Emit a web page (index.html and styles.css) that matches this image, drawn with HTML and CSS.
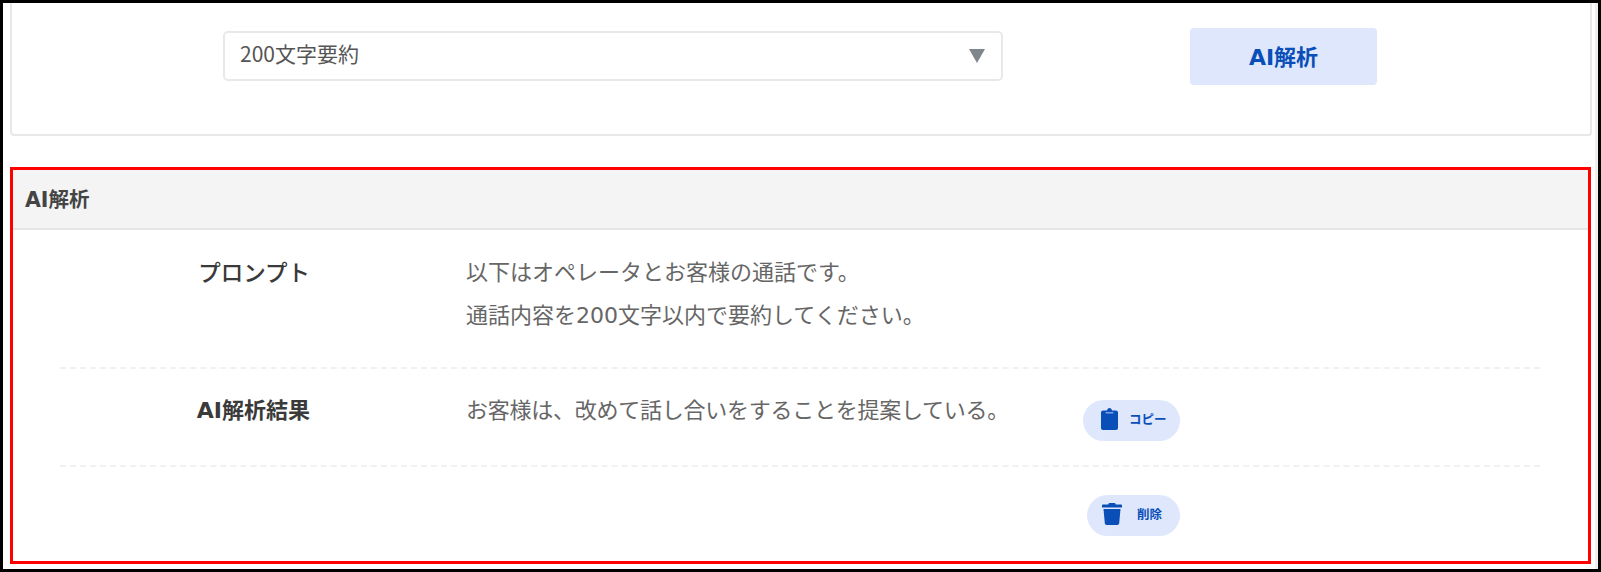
FILE: index.html
```html
<!DOCTYPE html>
<html lang="ja">
<head>
<meta charset="utf-8">
<title>AI解析</title>
<link rel="stylesheet" href="styles.css">
</head>
<body>
<div class="frame">
  <main class="main">
    <section class="card">
      <div class="select">
        <span>200文字要約</span>
        <span class="arrow"></span>
      </div>
      <button class="run" type="button">AI解析</button>
    </section>
    <section class="panel">
      <h2 class="panel-title">AI解析</h2>
      <div class="row row-prompt">
        <div class="label label-light">プロンプト</div>
        <div class="value">
          <p>以下はオペレータとお客様の通話です。</p>
          <p>通話内容を200文字以内で要約してください。</p>
        </div>
      </div>
      <div class="row row-result">
        <div class="label">AI解析結果</div>
        <div class="value"><p class="tight">お客様は、改めて話し合いをすることを提案している。</p></div>
        <button class="pill pill-copy" type="button">
          <svg class="icon" viewBox="0 0 17 22" aria-hidden="true"><path d="M2 2.500h4C6.300 1 7.200 0 8.500 0S10.700 1 11 2.500h4c1.100 0 2 .9 2 2V20c0 1.100-.9 2-2 2H2c-1.100 0-2-.9-2-2V4.500c0-1.100.9-2 2-2z" fill="#0a4fb8"/><rect x="4.500" y="4" width="8" height="1.500" rx=".7" fill="#7fa3e2"/></svg>
          <span>コピー</span>
        </button>
      </div>
      <div class="row row-delete">
        <button class="pill pill-delete" type="button">
          <svg class="icon" viewBox="0 0 20 22" aria-hidden="true"><path d="M7 0h6l.8 1.500H19c.6 0 1 .4 1 1V4.500H0V2.500c0-.6.4-1 1-1h5.200zM1.500 6h17l-1.300 14.300c-.1 1-.9 1.700-1.900 1.700H4.700c-1 0-1.800-.7-1.900-1.700z" fill="#0a4fb8"/></svg>
          <span>削除</span>
        </button>
      </div>
    </section>
  </main>
  <div class="edge"></div>
</div>
</body>
</html>
```
FILE: styles.css
```css
* { box-sizing: border-box; }
html, body { margin: 0; padding: 0; }
body {
  width: 1601px;
  height: 572px;
  overflow: hidden;
  background: #fff;
  font-family: "DejaVu Sans", "Noto Sans CJK JP", sans-serif;
  color: #555;
}
.frame {
  height: 572px;
  border: 3px solid #000;
  display: flex;
}
.main {
  flex: 1;
  min-width: 0;
  padding: 0 3px 5px 7px;
  display: flex;
  flex-direction: column;
  gap: 31px;
}
.edge {
  width: 3px;
  background: #efefef;
}
.card {
  height: 133px;
  border: 2px solid #e8e8e8;
  border-top: 0;
  border-radius: 0 0 4px 4px;
  padding: 25px 213px 0 211px;
  display: flex;
  align-items: flex-start;
  justify-content: space-between;
}
.select {
  width: 780px;
  height: 50px;
  margin-top: 3px;
  border: 2px solid #e8e8e8;
  border-radius: 5px;
  padding: 0 16px 7px 15px;
  display: flex;
  align-items: center;
  justify-content: space-between;
  font-family: "Noto Sans CJK JP", sans-serif;
  font-size: 21px;
  color: #555;
}
.arrow {
  width: 0;
  height: 0;
  margin-top: 7px;
  border-left: 8.5px solid transparent;
  border-right: 8.5px solid transparent;
  border-top: 14px solid #7f868c;
}
.run {
  width: 187px;
  height: 57px;
  padding: 0 0 3px;
  border: 0;
  border-radius: 4px;
  background: #dfe7fd;
  color: #0a4fb8;
  font: 700 22px "DejaVu Sans", "Noto Sans CJK JP", sans-serif;
}
.panel {
  flex: 1;
  margin-right: 1px;
  border: 3px solid #f00;
  display: flex;
  flex-direction: column;
}
.panel-title {
  height: 60px;
  margin: 0;
  padding: 0 0 2px 12px;
  display: flex;
  align-items: center;
  background: #f4f4f4;
  border-bottom: 2px solid #e6e6e6;
  font-size: 20.5px;
  font-weight: 700;
  color: #444;
}
.row {
  margin: 0 48px 0 47px;
  display: grid;
  grid-template-columns: 250px 766px 104px;
  align-items: start;
}
.row-prompt { height: 139px; padding-top: 21px; border-bottom: 2px dashed #f1f1f1; }
.row-result { height: 98px; padding-top: 20px; border-bottom: 2px dashed #f1f1f1; }
.label {
  grid-column: 1;
  text-align: right;
  font-size: 22px;
  line-height: 43px;
  font-weight: 700;
  color: #3a3a3a;
}
.label-light {
  margin-top: -1px;
  font-weight: 500;
  font-size: 22.5px;
  font-family: "Noto Sans CJK JP", sans-serif;
}
.value {
  grid-column: 2;
  padding-left: 156px;
  font-size: 22px;
  line-height: 43px;
  color: #666;
}
.value p { margin: 0; white-space: nowrap; }
.value .tight { letter-spacing: -0.25px; }
.pill {
  grid-column: 3;
  justify-self: end;
  height: 41px;
  border: 0;
  border-radius: 21px;
  background: #dfe7fd;
  color: #0a4fb8;
  display: flex;
  align-items: center;
  font: 700 12.5px "Noto Sans CJK JP", sans-serif;
}
.pill-copy { width: 97px; margin-top: 11px; padding: 0 0 4px 18px; gap: 11px; }
.pill-delete { width: 93px; margin-top: 28px; padding: 0 0 4px 15px; gap: 15px; }
.icon { flex: none; height: 22px; }
.pill-copy .icon { width: 17px; }
.pill-delete .icon { width: 20px; }
```
